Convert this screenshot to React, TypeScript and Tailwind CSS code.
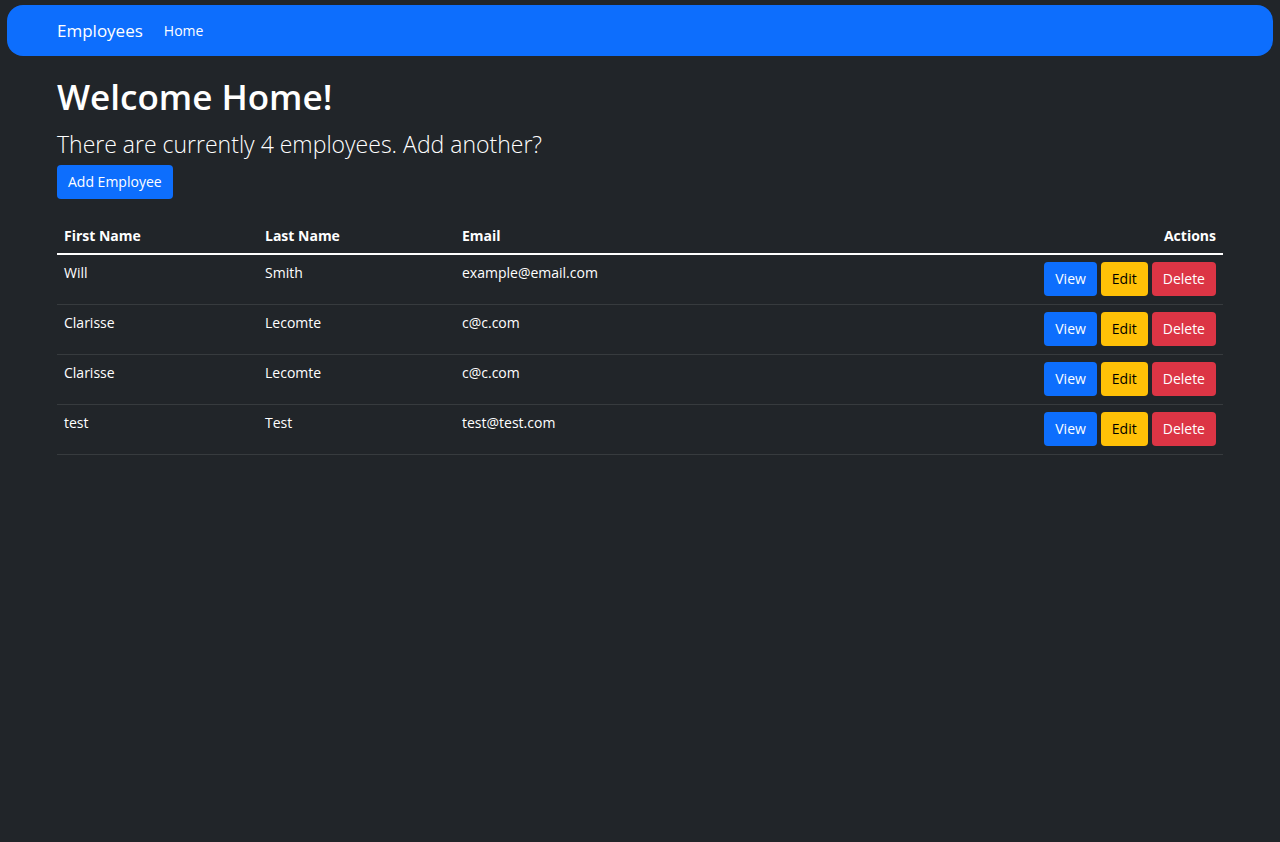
import React from "react";

type Employee = { id: number; first: string; last: string; email: string };

const employees: Employee[] = [
  { id: 1, first: "Will", last: "Smith", email: "example@email.com" },
  { id: 2, first: "Clarisse", last: "Lecomte", email: "c@c.com" },
  { id: 3, first: "Clarisse", last: "Lecomte", email: "c@c.com" },
  { id: 4, first: "test", last: "Test", email: "test@test.com" },
];

const button = "inline-block rounded-[4px] px-[11px] py-[7px] text-sm leading-5";
const heading = "px-[7px] pt-2 pb-[6px] font-bold";
const cell = "px-[7px] pt-[7px] pb-2 align-top";

export default function App() {
  return (
    <div className="min-h-screen bg-[#212529] px-[7px] pt-[5px] font-['Open_Sans','Noto_Sans',sans-serif] text-sm leading-[22px] text-white">
      <nav className="flex h-[51px] items-center gap-[21px] rounded-2xl bg-[#0d6efd] px-[50px]">
        <a href="#" className="text-[17px]">Employees</a>
        <a href="#home">Home</a>
      </nav>
      <main className="px-[50px] pt-[19px]">
        <h1 className="text-[35px] leading-[44px] font-semibold">Welcome Home!</h1>
        <p className="mt-2 text-[23px] leading-[34px] font-light">
          There are currently {employees.length} employees. Add another?
        </p>
        <button type="button" className={`${button} mt-1 bg-[#0d6efd]`}>Add Employee</button>
        <table className="mt-[18px] w-full border-collapse text-left">
          <thead>
            <tr className="border-b-2 border-white">
              <th scope="col" className={`${heading} w-[201px]`}>First Name</th>
              <th scope="col" className={`${heading} w-[197px]`}>Last Name</th>
              <th scope="col" className={heading}>Email</th>
              <th scope="col" className={`${heading} text-right`}>Actions</th>
            </tr>
          </thead>
          <tbody>
            {employees.map((e) => (
              <tr key={e.id} className="border-b border-[#373b3e]">
                <td className={cell}>{e.first}</td>
                <td className={cell}>{e.last}</td>
                <td className={cell}>{e.email}</td>
                <td className={cell}>
                  <div className="flex justify-end gap-1">
                    <button type="button" className={`${button} bg-[#0d6efd]`}>View</button>
                    <button type="button" className={`${button} bg-[#ffc107] text-black`}>Edit</button>
                    <button type="button" className={`${button} bg-[#dc3545]`}>Delete</button>
                  </div>
                </td>
              </tr>
            ))}
          </tbody>
        </table>
      </main>
    </div>
  );
}
